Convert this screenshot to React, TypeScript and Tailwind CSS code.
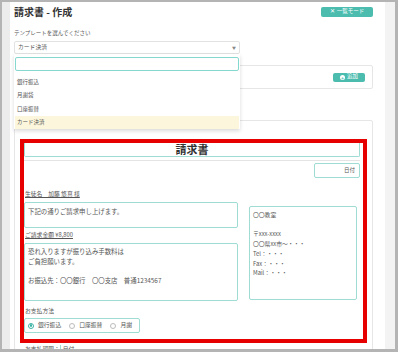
import React from 'react';

const teal = 'border-[#9edcd4]';

const Radio: React.FC<{ label: string; checked?: boolean }> = ({ label, checked }) => (
  <div className="flex items-center gap-[4px]">
    <span className={`flex h-[6px] w-[6px] items-center justify-center rounded-full border ${checked ? 'border-[#3bb3a5]' : 'border-[#bbbbbb]'} bg-white`}>
      {checked && <span className="h-[2.5px] w-[2.5px] rounded-full bg-[#3bb3a5]" />}
    </span>
    <span>{label}</span>
  </div>
);

export default function App() {
  return (
    <div
      className="relative flex h-[352px] w-[398px] overflow-hidden border-t-2 border-l-2 border-r-[3px] border-b-[3px] border-[#b4b4b4] bg-[#f1f1f1] text-[#555]"
      style={{ fontFamily: '"Noto Sans CJK JP", "Noto Sans", sans-serif' }}
    >
      {/* left strip */}
      <div className="w-[8px] shrink-0 bg-[#ececec]" />

      {/* main page */}
      <div className="flex w-[375px] shrink-0 flex-col bg-white pl-[4px] pr-[12px]">
        {/* header */}
        <div className="mt-[5px] flex h-[10px] shrink-0 items-center justify-between">
          <h1 className="text-[10px] font-bold leading-[10px] text-[#333]">請求書 - 作成</h1>
          <button className="flex h-[10px] w-[52px] items-center justify-center gap-[2px] rounded-[2px] bg-[#4cbcaf] text-[5.5px] leading-none text-white">
            <span>✕</span>
            <span>一覧モード</span>
          </button>
        </div>

        <p className="mt-[12px] h-[8px] shrink-0 text-[5.5px] leading-[8px]">テンプレートを選んでください</p>

        {/* select */}
        <div className="mt-[4px] flex h-[13px] w-[226px] shrink-0 items-center justify-between rounded-[2px] border border-[#e2e2e2] px-[3px] text-[5.8px]">
          <span>カード決済</span>
          <span className="text-[4px] text-[#888]">▼</span>
        </div>

        {/* panel 1 */}
        <div className="mt-[11px] flex h-[24px] shrink-0 items-center justify-end rounded-[2px] border border-[#e6e6e6] pr-[7px]">
          <button className="flex h-[9px] w-[32px] items-center justify-center gap-[2px] rounded-[2px] bg-[#4cbcaf] text-[5.5px] leading-none text-white">
            <span className="flex h-[5px] w-[5px] items-center justify-center rounded-full bg-white text-[5px] font-bold leading-none text-[#4cbcaf]">+</span>
            <span>追加</span>
          </button>
        </div>

        {/* panel 2 */}
        <div className="mt-[31px] flex shrink-0 flex-col rounded-[2px] border border-[#e6e6e6] px-[5px] pt-[18px] pb-[20px]">
          <div className="flex flex-col border-4 border-[#e60000] pr-[3px] pb-[6px]">
            {/* title */}
            <div className={`flex h-[14px] items-center justify-center rounded-b-[2px] border-x border-b ${teal}`}>
              <span className="text-[11px] font-bold leading-none text-[#333]">請求書</span>
            </div>
            <div className="mt-[3px] h-px bg-[#e4e4e4]" />
            <div className={`mt-[2px] flex h-[15px] w-[46px] items-center justify-end self-end rounded-[2px] border ${teal} pr-[4px] text-[5.5px]`}>
              日付
            </div>

            <div className="flex">
              {/* left column */}
              <div className="flex w-[214px] flex-col">
                <p className="mt-[12px] h-[8px] pl-[1px] text-[5.8px] leading-[8px] underline">生徒名　加藤 悠真 様</p>
                <div className={`mt-[4px] h-[26px] rounded-[2px] border ${teal} px-[3px] pt-[4px] text-[6.4px] leading-[9px]`}>
                  下記の通りご請求申し上げます。
                </div>
                <p className="mt-[3px] h-[8px] pl-[1px] text-[5.8px] leading-[8px] underline">ご請求金額 ¥8,800</p>
                <div className={`mt-[4px] h-[58px] rounded-[2px] border ${teal} px-[3px] pt-[3px] text-[6.4px] leading-[9.7px]`}>
                  <p>恐れ入りますが振り込み手数料は</p>
                  <p>ご負担願います。</p>
                  <p>&nbsp;</p>
                  <p>お振込先：〇〇銀行　〇〇支店　普通1234567</p>
                </div>
                <p className="mt-[6px] h-[8px] pl-[1px] text-[5.8px] leading-[8px]">お支払方法</p>
                <div className={`mt-[3px] flex h-[15px] w-[116px] items-center gap-[8px] rounded-[2px] border ${teal} pl-[3px] text-[5.8px]`}>
                  <Radio label="銀行振込" checked />
                  <Radio label="口座振替" />
                  <Radio label="月謝" />
                </div>
              </div>

              {/* right column */}
              <div className={`ml-[11px] mt-[28px] h-[94px] w-[108px] rounded-[2px] border ${teal} px-[3px] pt-[3px] text-[5.8px] leading-[9.7px]`}>
                <p>〇〇教室</p>
                <p>&nbsp;</p>
                <p>〒xxx-xxxx</p>
                <p>〇〇県xx市～・・・</p>
                <p>Tel：・・・</p>
                <p>Fax：・・・</p>
                <p>Mail：・・・</p>
              </div>
            </div>
          </div>

          <div className="mt-[2px] flex items-center pl-[5px] text-[5.8px] leading-[8px]">
            <span>お支払期限：</span>
            <span className={`border-l ${teal} pl-[2px]`}>日付</span>
          </div>
        </div>
      </div>

      {/* right strip */}
      <div className="flex-1 bg-[#f3f3f3]" />

      {/* open dropdown */}
      <div className="absolute left-[12px] top-[52px] flex h-[75px] w-[226px] flex-col bg-white px-[1px] pt-[3px] text-[5.5px] shadow-[0_2px_4px_rgba(0,0,0,0.15)]">
        <div className="h-[14px] rounded-[2px] border border-[#86d8ce]" />
        <ul className="mt-[4px] flex flex-col">
          <li className="flex h-[13.5px] items-center pl-[2px]">銀行振込</li>
          <li className="flex h-[13.5px] items-center pl-[2px]">月謝袋</li>
          <li className="flex h-[13.5px] items-center pl-[2px]">口座振替</li>
          <li className="flex h-[13.5px] items-center bg-[#fcf7dc] pl-[2px]">カード決済</li>
        </ul>
      </div>
    </div>
  );
}
